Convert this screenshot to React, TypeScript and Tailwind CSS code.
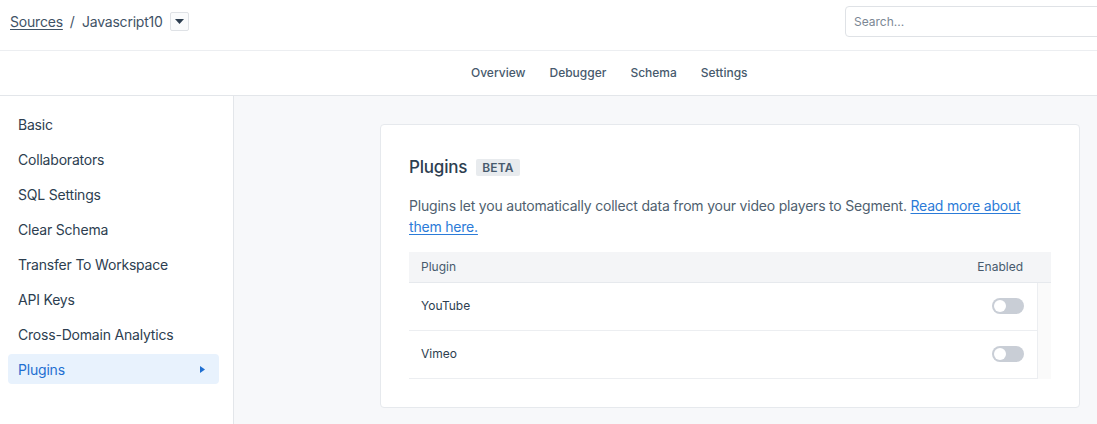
import { useState } from 'react';

const sections = [
  'Basic',
  'Collaborators',
  'SQL Settings',
  'Clear Schema',
  'Transfer To Workspace',
  'API Keys',
  'Cross-Domain Analytics',
  'Plugins',
];

const tabs = ['Overview', 'Debugger', 'Schema', 'Settings'];

function Toggle({ on, onChange }: { on: boolean; onChange: () => void }) {
  return (
    <button
      onClick={onChange}
      className={`relative h-4 w-8 rounded-full transition-colors ${on ? 'bg-[#2b7bd8]' : 'bg-[#c9ced6]'}`}
    >
      <span
        className={`absolute top-[2px] h-3 w-3 rounded-full bg-white transition-all ${on ? 'left-[18px]' : 'left-[2px]'}`}
      />
    </button>
  );
}

export default function App() {
  const [plugins, setPlugins] = useState([
    { name: 'YouTube', enabled: false },
    { name: 'Vimeo', enabled: false },
  ]);

  const toggle = (i: number) =>
    setPlugins((p) => p.map((x, j) => (j === i ? { ...x, enabled: !x.enabled } : x)));

  return (
    <div className="flex h-[424px] w-[1097px] flex-col overflow-hidden bg-white font-['Inter',sans-serif] text-[#2d3e50]">
      {/* Top bar */}
      <header className="flex h-[51px] shrink-0 items-center border-b border-[#eceef1] pb-[7px] pl-[10px]">
        <a className="text-[14px] tracking-[-0.2px] text-[#3f5366] underline decoration-1 underline-offset-2">Sources</a>
        <span className="mx-[7px] text-[14px] text-[#3f5366]">/</span>
        <span className="text-[14px] tracking-[-0.2px] text-[#3f5366]">Javascript10</span>
        <button className="ml-[7px] flex h-[19px] w-[19px] items-center justify-center rounded-[2px] border border-[#dfe2e6] bg-[#fafbfc]">
          <svg width="9" height="5" viewBox="0 0 9 5">
            <path d="M0 0h9L4.5 5z" fill="#2d3e50" />
          </svg>
        </button>
        <div className="ml-auto -mr-[40px] flex h-[31px] w-[292px] items-center rounded-[4px] border border-[#dfe2e6] px-[8px]">
          <input
            placeholder="Search..."
            className="w-full bg-transparent text-[12px] text-[#2d3e50] outline-none placeholder:text-[#7b8794]"
          />
        </div>
      </header>

      {/* Tabs */}
      <nav className="flex h-[45px] shrink-0 items-center gap-[24px] border-b border-[#e3e6ea] pl-[471px]">
        {tabs.map((t) => (
          <a key={t} className="text-[12px] font-medium text-[#475a6d]">
            {t}
          </a>
        ))}
      </nav>

      <div className="flex min-h-0 flex-1">
        {/* Sidebar */}
        <aside className="w-[234px] shrink-0 border-r border-[#e3e6ea] pl-[8px] pr-[14px] pt-[13px]">
          {sections.map((s) => {
            const active = s === 'Plugins';
            return (
              <div
                key={s}
                className={`mb-[5px] flex h-[30px] items-center rounded-[4px] px-[10px] text-[14px] tracking-[-0.2px] ${
                  active ? 'bg-[#e8f2fd] text-[#1f6fd1]' : 'text-[#2d3e50]'
                }`}
              >
                <span>{s}</span>
                {active && (
                  <svg className="ml-auto mr-[4px]" width="5" height="7" viewBox="0 0 5 7">
                    <path d="M0 0l5 3.5L0 7z" fill="#1f6fd1" />
                  </svg>
                )}
              </div>
            );
          })}
        </aside>

        {/* Main */}
        <main className="flex-1 bg-[#f7f8fa] pl-[146px] pt-[28px]">
          <section className="w-[700px] rounded-[4px] border border-[#e6e9ed] bg-white px-[28px] pb-[28px] pt-[30px]">
            <div className="flex items-center">
              <h2 className="text-[17px] font-medium tracking-[-0.2px] text-[#2d3e50]">Plugins</h2>
              <span className="ml-[9px] rounded-[2px] bg-[#e8ebee] px-[6px] text-[12px] font-semibold leading-[17px] tracking-[0.2px] text-[#475a6d]">
                BETA
              </span>
            </div>
            <p className="mt-[14px] text-[14px] leading-[21px] tracking-[-0.2px] text-[#4f5f6f]">
              Plugins let you automatically collect data from your video players to Segment.{' '}
              <a className="text-[#2b7bd8] underline underline-offset-2">Read more about them here.</a>
            </p>

            <div className="mt-[15px]">
              <div className="flex h-[31px] items-center border-b border-[#e6e9ed] bg-[#f4f5f7] px-[12px] pr-[28px] text-[12px] text-[#475a6d]">
                <span>Plugin</span>
                <span className="ml-auto">Enabled</span>
              </div>
              <div className="flex">
                <div className="flex-1">
                  {plugins.map((p, i) => (
                    <div
                      key={p.name}
                      className="flex h-[48px] items-center border-b border-[#eceef1] pl-[12px] pr-[13px] text-[12px] text-[#2d3e50]"
                    >
                      <span>{p.name}</span>
                      <span className="ml-auto flex">
                        <Toggle on={p.enabled} onChange={() => toggle(i)} />
                      </span>
                    </div>
                  ))}
                </div>
                <div className="w-[14px] border-l border-[#eceef1] bg-[#fafafa]" />
              </div>
            </div>
          </section>
        </main>
      </div>
    </div>
  );
}
